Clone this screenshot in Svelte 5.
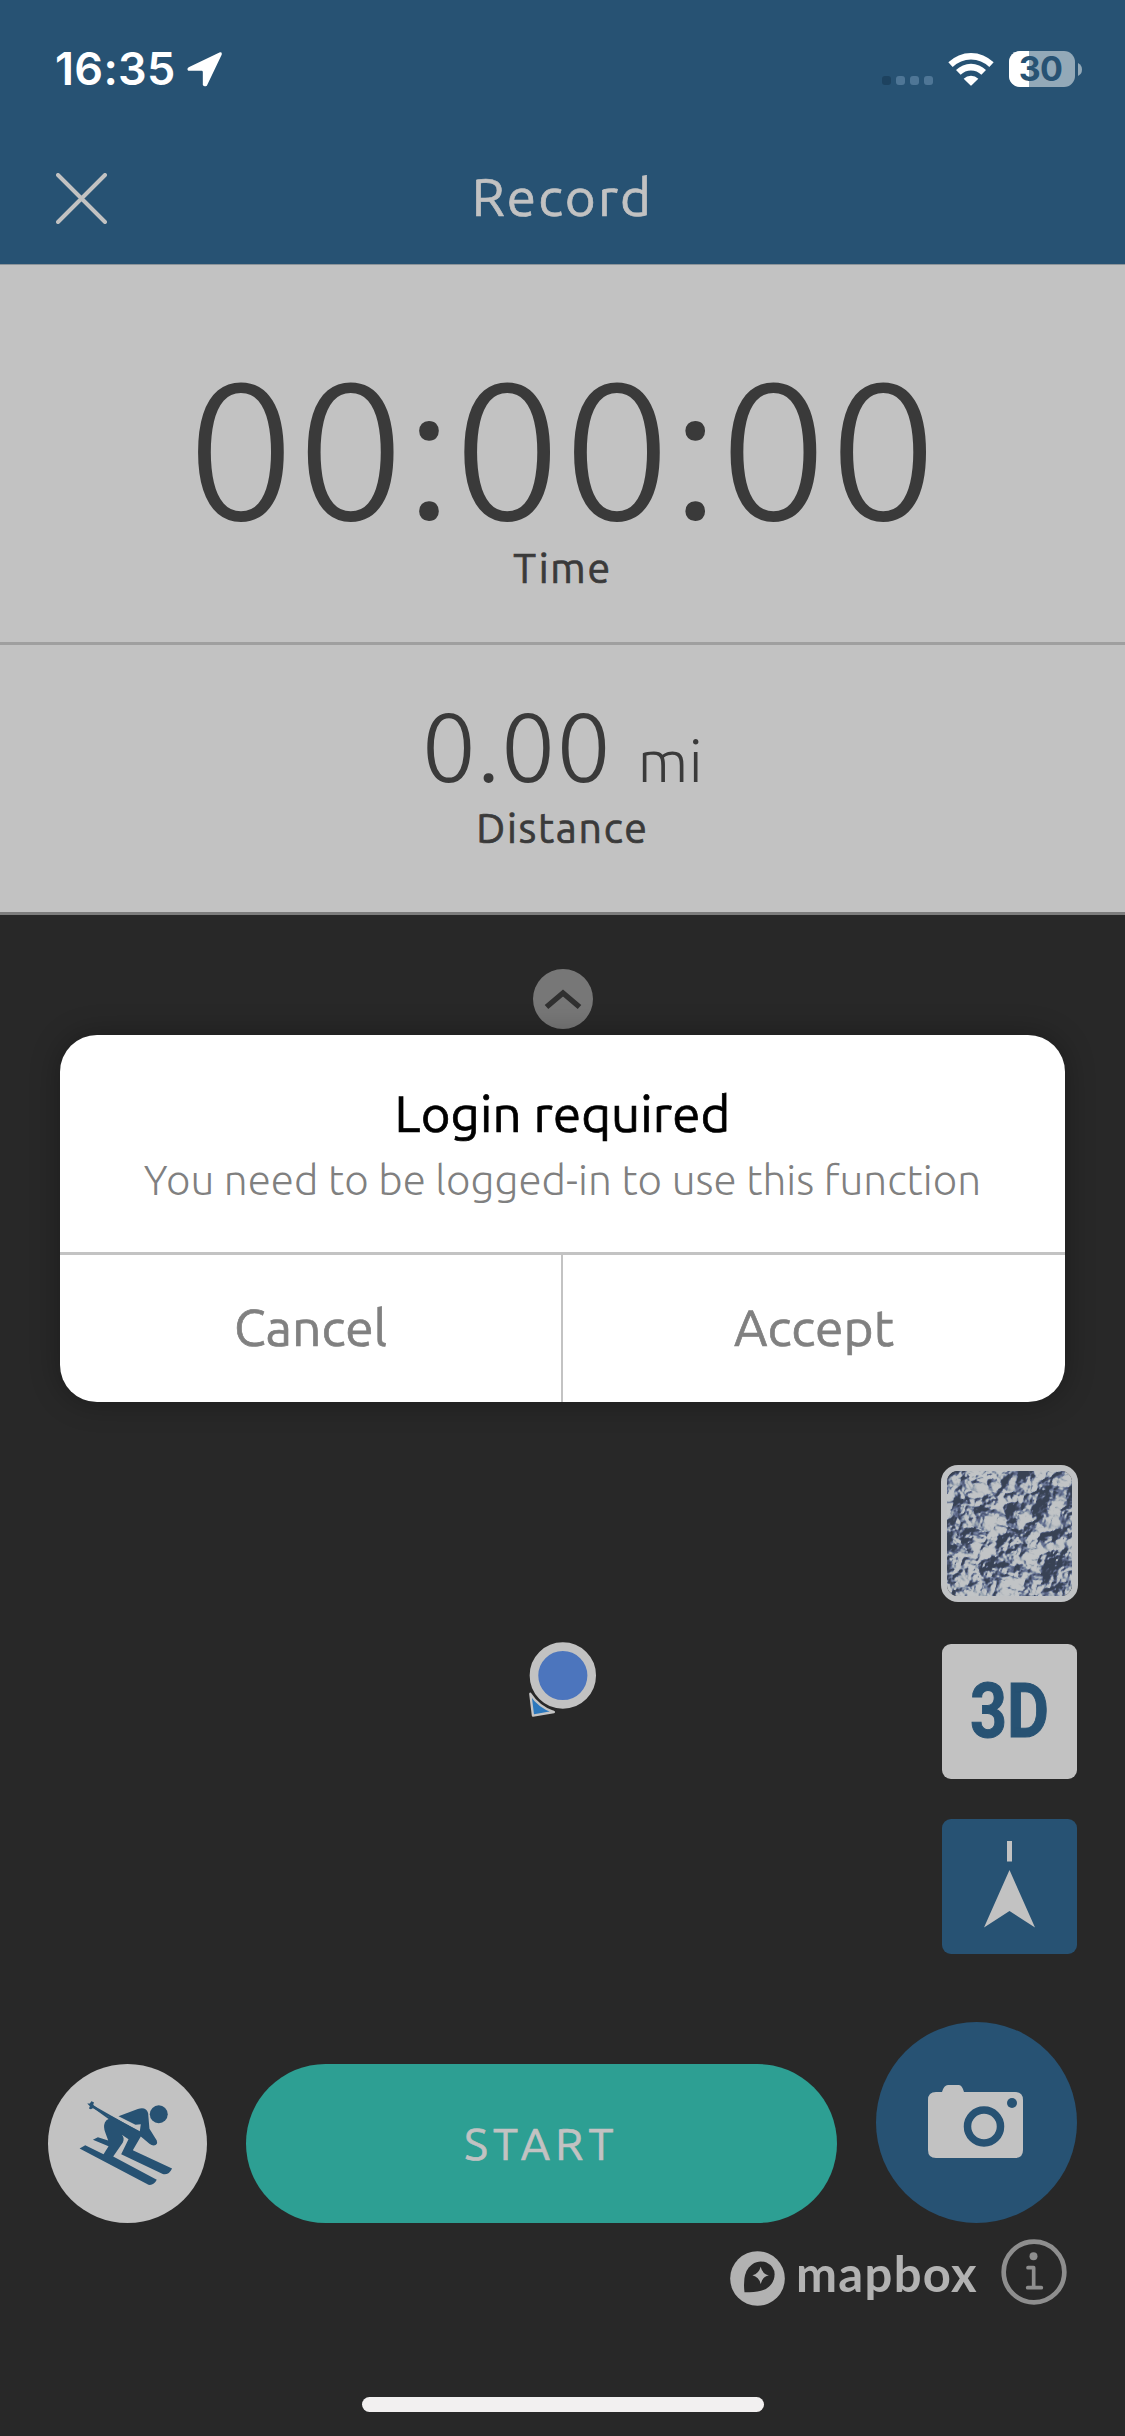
<script lang="ts">
	interface Props {
		time?: string;
		distance?: string;
		unit?: string;
		battery?: number;
	}

	let { time = '00:00:00', distance = '0.00', unit = 'mi', battery = 30 }: Props = $props();

	let dialogOpen = $state(true);

	function closeDialog() {
		dialogOpen = false;
	}
</script>

<div class="screen">
	<header class="header">
		<div class="status">
			<div class="status-left">
				<span class="clock">16:35</span>
				<svg class="location" viewBox="426 38 104 104" aria-hidden="true">
					<path d="M524 39 L431 83 Q424 88 430 94 H470 Q473 94 473 98 V136 Q477 143 485 138 L529 46 Q531 38 524 39 Z" fill="#fff" />
				</svg>
			</div>
			<div class="status-right">
				<div class="dots"><i class="dim"></i><i></i><i></i><i></i></div>
				<svg class="wifi" viewBox="264 64 138 102" aria-hidden="true">
					<path d="M265 95 A97 97 0 0 1 401 95 L388 109 A79 79 0 0 0 278 109 Z" fill="#fff" />
					<path d="M288 118 A64 64 0 0 1 378 118 L364 132 A44 44 0 0 0 302 132 Z" fill="#fff" />
					<path d="M311 144 A32 32 0 0 1 355 144 L335 164 Q333 166 331 164 Z" fill="#fff" />
				</svg>
				<div class="battery">
					<div class="battery-body">
						<div class="battery-fill" style="width: {battery}%"></div>
						<span>{battery}</span>
					</div>
					<svg class="nub" viewBox="0 0 4 13" aria-hidden="true">
						<path d="M0 0 Q4 2 4 6.5 Q4 11 0 13 Z" fill="#93a9b8" />
					</svg>
				</div>
			</div>
		</div>
		<div class="nav">
			<button class="close" aria-label="Close">
				<svg viewBox="0 0 51 51"><path d="M2 2 L49 49 M49 2 L2 49" stroke="#c2c2c2" stroke-width="4" stroke-linecap="round" /></svg>
			</button>
			<h1>Record</h1>
		</div>
	</header>

	<section class="stat stat-time">
		<div class="value">{time}</div>
		<div class="label label-time">Time</div>
	</section>
	<section class="stat stat-distance">
		<div class="value"><span>{distance}</span><span class="unit">{unit}</span></div>
		<div class="label">Distance</div>
	</section>

	<main class="map">
		<button class="expand" aria-label="Expand">
			<svg viewBox="0 0 60 60"><path d="M13.500 38 L30 24 L46.500 38" fill="none" stroke="#303030" stroke-width="5.500" /></svg>
		</button>

		<svg class="marker" viewBox="80 90 214 236" aria-hidden="true">
			<path d="M90 251 L98 317 L161 306 Q116 291 90 251 Z" fill="#2c78bd" stroke="#c4c4c4" stroke-width="7" stroke-linejoin="round" />
			<circle cx="188" cy="196" r="87" fill="#4c75bd" stroke="#c2c2c2" stroke-width="26" />
		</svg>

		<div class="tools">
			<button class="tool layers" aria-label="Map layers">
				<svg viewBox="0 0 125 125">
					<filter id="terrain" x="0" y="0" width="100%" height="100%" color-interpolation-filters="sRGB">
						<feTurbulence type="turbulence" baseFrequency="0.019 0.022" numOctaves="5" seed="4" />
						<feColorMatrix values="0 0 0 0 0  0 0 0 0 0  0 0 0 0 0  -1 -0.500 0 0 1" />
						<feDiffuseLighting surfaceScale="22" diffuseConstant="1.250" lighting-color="#ffffff">
							<feDistantLight azimuth="200" elevation="50" />
						</feDiffuseLighting>
						<feComponentTransfer>
							<feFuncR type="table" tableValues="0.220 0.260 0.330 0.400 0.500 0.620 0.710 0.760" />
							<feFuncG type="table" tableValues="0.260 0.300 0.370 0.450 0.550 0.660 0.730 0.770" />
							<feFuncB type="table" tableValues="0.330 0.390 0.490 0.580 0.640 0.700 0.750 0.780" />
						</feComponentTransfer>
					</filter>
					<g transform="rotate(18 62 62)">
						<rect x="-40" y="-40" width="205" height="205" filter="url(#terrain)" />
					</g>
				</svg>
			</button>
			<button class="tool three-d"><span>3D</span></button>
			<button class="tool compass" aria-label="Compass">
				<svg viewBox="0 0 135 135">
					<path d="M65 22 H70 V42.500 H65 Z M67.500 51 L93 108.500 L67.500 92 L42 108.500 Z" fill="#c2c2c2" />
				</svg>
			</button>
		</div>

		<div class="actions">
			<button class="sport" aria-label="Ski">
				<svg viewBox="23 26 478 478" fill="#275273">
					<circle cx="356" cy="177" r="27" />
					<path d="M141 145 L149 145 L153 138 L161 141 L159 149 L206 185 L214 183 L299 228 L302 207 L286 209 L235 183 L293 161 Q318 153 324 174 L328 221 L350 256 Q354 270 341 271 Q334 271 328 266 L302 244 L278 285 L396 340 Q386 361 368 357 L243 297 L265 252 L245 239 Q254 249 248 262 L219 304 L350 374 Q341 392 325 389 L118 280 L135 270 L190 297 L205 273 L158 254 L173 246 L204 256 L196 234 Q188 216 194 202 Q198 193 205 191 L159 158 L152 162 L146 160 L149 153 Z" />
					<path d="M157 149 L297 229 L293 234 L155 157 Z" />
				</svg>
			</button>
			<button class="start">START</button>
			<button class="camera" aria-label="Take photo">
				<svg viewBox="0 0 95 73">
					<path d="M8 7 H14 Q16 0 20 0 H31 Q34 0 36 7 H87 Q95 7 95 15 V65 Q95 73 87 73 H8 Q0 73 0 65 V15 Q0 7 8 7 Z" fill="#c2c2c2" />
					<circle cx="56" cy="41.500" r="16.500" fill="none" stroke="#275273" stroke-width="7.500" />
					<circle cx="84" cy="18" r="5" fill="#275273" />
				</svg>
			</button>
		</div>

		<div class="attribution">
			<svg class="mapbox-logo" viewBox="29 62 167 167" aria-hidden="true">
				<circle cx="112.500" cy="145.500" r="83" fill="#b2b2b2" />
				<path d="M73 187 Q67 135 86 112 Q108 86 140 97 Q172 113 162 148 Q148 192 73 187 Z" fill="#282828" />
				<path d="M122 110 Q127 131 147 136 Q127 141 122 162 Q117 141 97 136 Q117 131 122 110 Z" fill="#b2b2b2" />
			</svg>
			<span class="mapbox-name">mapbox</span>
			<svg class="info" viewBox="845 26 198 198" fill="none" stroke="#8e8e8e" aria-hidden="true">
				<circle cx="944" cy="125" r="91" stroke-width="14" />
				<circle cx="942.500" cy="78" r="12" fill="#8e8e8e" stroke="none" />
				<path d="M926 112 H943 V172 M925 172 H966" stroke-width="11" stroke-linecap="round" stroke-linejoin="round" />
			</svg>
		</div>

		<div class="home-indicator"></div>
	</main>

	{#if dialogOpen}
		<div class="dialog" role="alertdialog" aria-labelledby="dialog-title">
			<div class="dialog-body">
				<h2 id="dialog-title">Login required</h2>
				<p>You need to be logged-in to use this function</p>
			</div>
			<div class="dialog-actions">
				<button onclick={closeDialog}>Cancel</button>
				<button onclick={closeDialog}>Accept</button>
			</div>
		</div>
	{/if}
</div>

<style>
	:global(body) {
		margin: 0;
		background: #282828;
	}

	.screen {
		position: relative;
		display: flex;
		flex-direction: column;
		width: 1125px;
		height: 2436px;
		overflow: hidden;
		background: #282828;
		font-family: Ubuntu, 'Noto Sans', sans-serif;
	}

	button {
		display: flex;
		align-items: center;
		justify-content: center;
		margin: 0;
		padding: 0;
		border: none;
		background: none;
		font-family: inherit;
		font-weight: inherit;
		cursor: pointer;
	}

	svg {
		display: block;
	}

	h1,
	h2,
	p {
		margin: 0;
		font-weight: inherit;
	}

	/* regular weight runs a little thin at these sizes */
	h1,
	h2,
	.label,
	.start,
	.dialog-actions {
		-webkit-text-stroke: 0.7px currentColor;
	}

	.header {
		height: 264px;
		background: #275273;
		border-bottom: 1px solid #8c949a;
	}

	.status {
		display: flex;
		justify-content: space-between;
		align-items: center;
		height: 138px;
		padding: 0 43px 0 55px;
		font-family: Inter, sans-serif;
	}

	.status-left {
		display: flex;
		align-items: center;
		gap: 11px;
	}

	.clock {
		font-size: 45px;
		font-weight: 600;
		line-height: 60px;
		letter-spacing: 0.3px;
		color: #fff;
	}

	.location {
		width: 35px;
		height: 35px;
	}

	.status-right {
		display: flex;
		align-items: center;
	}

	.dots {
		display: flex;
		gap: 5px;
		margin: 23px 15px 0 0;
	}

	.dots i {
		width: 9px;
		height: 9px;
		border-radius: 3px;
		background: #4f7696;
	}

	.dots .dim {
		background: #1d425f;
	}

	.wifi {
		width: 46px;
		height: 34px;
		margin-right: 15px;
	}

	.battery {
		display: flex;
		align-items: center;
		gap: 3px;
	}

	.battery-body {
		position: relative;
		display: flex;
		align-items: center;
		justify-content: center;
		width: 66px;
		height: 36px;
		border-radius: 11px;
		background: #93a9b8;
		font-size: 34px;
		font-weight: 700;
		line-height: 36px;
		color: #275273;
	}

	.battery-body span {
		position: relative;
		margin-right: 3px;
		letter-spacing: -0.8px;
	}

	.battery-fill {
		position: absolute;
		inset: 0 auto 0 0;
		border-radius: 11px 0 0 11px;
		background: #fff;
	}

	.nub {
		width: 4px;
		height: 13px;
	}

	.nav {
		display: grid;
		grid-template-columns: 164px 1fr 164px;
		align-items: center;
		height: 120px;
	}

	.close {
		justify-content: flex-start;
		padding-left: 56px;
	}

	.close svg {
		width: 51px;
		height: 51px;
	}

	h1 {
		padding-bottom: 3px;
		font-size: 53px;
		line-height: 116px;
		letter-spacing: 2.1px;
		text-align: center;
		color: #c2c2c2;
	}

	.stat {
		box-sizing: border-box;
		background: #c2c2c2;
		color: #3a3a3a;
		text-align: center;
	}

	.stat-time {
		height: 380px;
		padding-top: 92px;
		border-bottom: 3px solid #9f9f9f;
	}

	.stat-time .value {
		font-size: 193px;
		font-weight: 300;
		line-height: 180px;
		letter-spacing: 0.8px;
	}

	.stat-distance {
		height: 270px;
		padding-top: 51px;
		border-bottom: 3px solid #7d7d7d;
	}

	.stat-distance .value {
		display: flex;
		align-items: baseline;
		justify-content: center;
		height: 100px;
		font-size: 97px;
		font-weight: 300;
		line-height: 100px;
		letter-spacing: 0.7px;
	}

	.unit {
		margin-left: 26px;
		font-size: 59px;
		line-height: 60px;
	}

	.label {
		font-size: 41px;
		line-height: 64px;
		letter-spacing: 1.7px;
	}

	.label-time {
		line-height: 62px;
	}

	.map {
		display: flex;
		flex: 1;
		flex-direction: column;
		align-items: center;
	}

	.expand {
		width: 60px;
		height: 60px;
		margin-top: 54px;
		border-radius: 50%;
		background: #777;
	}

	.expand svg {
		width: 60px;
		height: 60px;
	}

	.marker {
		position: absolute;
		left: 526.5px;
		top: 1640px;
		width: 71px;
		height: 79px;
	}

	.tools {
		display: flex;
		flex-direction: column;
		align-items: center;
		align-self: flex-end;
		gap: 40px;
		margin: 436px 47px 0 0;
	}

	.tool {
		width: 135px;
		height: 135px;
		border-radius: 9px;
	}

	.layers {
		box-sizing: border-box;
		width: 137px;
		height: 137px;
		margin-bottom: 2px;
		border: 6px solid #c0c2c4;
		border-radius: 17px;
		overflow: hidden;
	}

	.layers svg {
		width: 125px;
		height: 125px;
		border-radius: 8px;
		overflow: hidden;
	}

	.three-d {
		background: #c2c2c2;
		font-family: Roboto, sans-serif;
		font-size: 76px;
		font-weight: 700;
		color: #275273;
	}

	.three-d span {
		padding-bottom: 2px;
		transform: scaleX(0.85);
		-webkit-text-stroke: 1px currentColor;
	}

	.compass {
		background: #275273;
	}

	.compass svg {
		width: 135px;
		height: 135px;
	}

	.actions {
		box-sizing: border-box;
		display: flex;
		align-items: flex-end;
		justify-content: space-between;
		width: 100%;
		margin-top: 68px;
		padding: 0 48px;
	}

	.sport {
		width: 159px;
		height: 159px;
		border-radius: 50%;
		background: #c2c2c2;
	}

	.sport svg {
		width: 159px;
		height: 159px;
	}

	.start {
		width: 591px;
		height: 159px;
		border-radius: 80px;
		background: #2d9f93;
		font-size: 45px;
		letter-spacing: 5.2px;
		color: #c2c2c2;
	}

	.camera {
		width: 201px;
		height: 201px;
		padding: 0 2px 2px 0;
		border-radius: 50%;
		background: #275273;
	}

	.camera svg {
		width: 95px;
		height: 73px;
	}

	.attribution {
		display: flex;
		align-items: center;
		align-self: flex-end;
		margin: 14px 58px 0 0;
	}

	.mapbox-logo {
		width: 55px;
		height: 55px;
		margin: 14px 11px 0 0;
	}

	.mapbox-name {
		width: 180px;
		margin-right: 25px;
		padding-top: 2px;
		font-family: Lato, sans-serif;
		font-size: 49px;
		font-weight: 700;
		line-height: 60px;
		letter-spacing: 1.3px;
		color: #b2b2b2;
	}

	.info {
		width: 66px;
		height: 66px;
	}

	.home-indicator {
		width: 402px;
		height: 15px;
		margin: auto 0 24px;
		border-radius: 8px;
		background: #f2f0f0;
	}

	.dialog {
		position: absolute;
		left: 60px;
		top: 1035px;
		display: flex;
		flex-direction: column;
		width: 1005px;
		height: 367px;
		border-radius: 37px;
		overflow: hidden;
		background: #fff;
		box-shadow: 0 0 30px rgb(0 0 0 / 0.3);
		text-align: center;
	}

	.dialog-body {
		box-sizing: border-box;
		height: 217px;
		padding-top: 46px;
	}

	h2 {
		font-size: 51px;
		line-height: 64px;
		letter-spacing: 0.1px;
		color: #000;
	}

	p {
		font-size: 42.2px;
		font-weight: 300;
		line-height: 70px;
		color: #808080;
	}

	.dialog-actions {
		display: grid;
		grid-template-columns: 503px 1fr;
		flex: 1;
		border-top: 3px solid #c3c3c3;
	}

	.dialog-actions button {
		padding-bottom: 3px;
		font-size: 51.5px;
		color: #808080;
	}

	.dialog-actions button:first-child {
		border-right: 2px solid #c3c3c3;
	}
</style>
